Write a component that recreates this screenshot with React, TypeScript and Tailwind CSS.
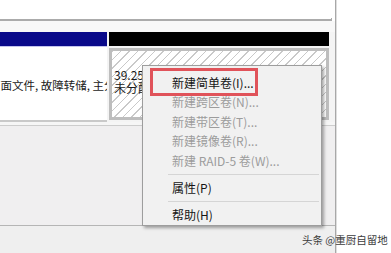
const menuItems = [
  { label: '新建简单卷(I)...', disabled: false },
  { label: '新建跨区卷(N)...', disabled: true },
  { label: '新建带区卷(T)...', disabled: true },
  { label: '新建镜像卷(R)...', disabled: true },
  { label: '新建 RAID-5 卷(W)...', disabled: true },
]

function Separator({ h }: { h: string }) {
  return (
    <div className={`${h} flex items-center pl-[25px] pr-[2px]`}>
      <div className="h-px w-full bg-[#d5d5d5]" />
    </div>
  )
}

function MenuItem({ label, disabled }: { label: string; disabled?: boolean }) {
  return (
    <div
      className={`h-[19.5px] flex items-center pl-[29px] text-[12px] whitespace-nowrap ${
        disabled ? 'text-[#9c9c9c]' : 'text-[#151515]'
      }`}
    >
      {label}
    </div>
  )
}

function ContextMenu() {
  return (
    <div className="absolute left-[142px] top-[65px] w-[180px] h-[161px] bg-[#f1f1f1] border border-[#9d9d9d] shadow-[2px_2px_3px_rgba(0,0,0,0.35)] pt-[7px]">
      {menuItems.map((item) => (
        <MenuItem key={item.label} label={item.label} disabled={item.disabled} />
      ))}
      <Separator h="h-[8px]" />
      <MenuItem label="属性(P)" />
      <Separator h="h-[7px]" />
      <MenuItem label="帮助(H)" />
      {/* red annotation box */}
      <div className="absolute left-[7px] top-[2px] w-[108px] h-[28px] border-[3px] border-[#e0535a]" />
    </div>
  )
}

export default function App() {
  return (
    <div
      className="relative w-[391px] h-[253px] flex bg-white overflow-hidden"
      style={{ fontFamily: '"Noto Sans CJK SC", "Noto Sans", sans-serif' }}
    >
      <div className="w-[335px] h-full flex flex-col">
        <div className="h-[18px] bg-white" />
        <div className="h-[3px] w-[332px] bg-white border-b-2 border-r border-[#ababab]" />
        <div className="h-[11px] bg-[#f8f8f8]" />

        {/* disk row */}
        <div className="h-[90px] flex bg-[#f4f4f4]">
          <div className="w-[107px] flex flex-col">
            <div className="h-[14px] bg-[#0a0a8a]" />
            <div className="flex-1 bg-white border-t border-[#c4c4ee] border-b-2 border-b-[#c9c9c9] overflow-hidden">
              <div className="pt-[30px] ml-[-11px] text-[11.5px] leading-[16px] text-[#1a1a1a] whitespace-nowrap">
                页面文件, 故障转储, 主分区
              </div>
            </div>
          </div>
          <div className="w-[2px]" />
          <div className="w-[220px] flex flex-col">
            <div className="h-[14px] bg-black" />
            <div className="mt-[2px] mb-[2px] flex-1 border-[3px] border-[#bdbdbd] bg-[repeating-linear-gradient(135deg,#c9c9c9_0px,#c9c9c9_1px,#ffffff_1px,#ffffff_6px)] pt-[17px] pl-[2px]">
              <div className="w-[28px] overflow-hidden text-[12px] leading-[13px] text-[#1a1a1a] whitespace-nowrap">
                <div>39.25 GB</div>
                <div>未分配</div>
              </div>
            </div>
          </div>
        </div>

        <div className="h-[4px] bg-[#f6f6f6] border-b border-[#cdcdcd]" />
        <div className="h-[100px] bg-[#f0eff0] border-b border-[#b5b5b5]" />
        <div className="flex-1 bg-[#efefef]" />
      </div>
      <div className="w-[1px] h-full bg-[#a8a8a8]" />
      <div className="w-[1px] h-full bg-[#dedede]" />
      <div className="flex-1 bg-white" />

      <ContextMenu />

      <div className="absolute left-[302px] top-[233px] text-[10.5px] leading-[14px] text-[#3c3c3c] whitespace-nowrap">
        头条 @重厨自留地
      </div>
    </div>
  )
}
